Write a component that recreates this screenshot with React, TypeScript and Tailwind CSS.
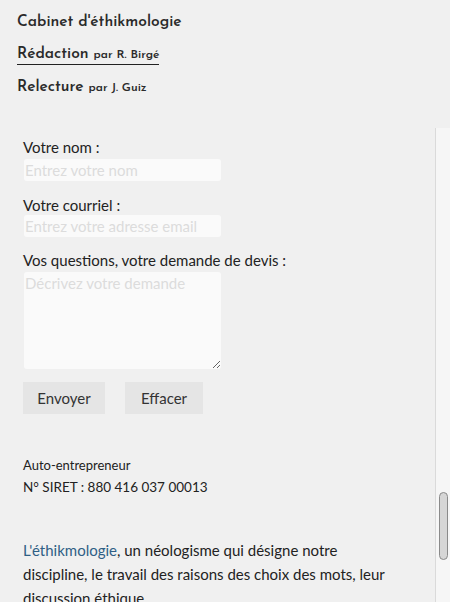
import React from "react";

export default function App() {
  const head = { fontFamily: '"Josefin Sans", "Lato", "Noto Sans", sans-serif' };
  const body = { fontFamily: 'Lato, "Noto Sans", sans-serif' };
  return (
    <div className="h-[602px] w-[450px] overflow-hidden bg-[#f0f0f0] flex flex-col text-[#222]" style={body}>
      <div className="px-[17px] pt-[12px] h-[128px] text-[#2a2a2a]" style={head}>
        <div className="text-[15.5px] font-semibold leading-[20px]">Cabinet d'éthikmologie</div>
        <div className="mt-[14px] leading-[17px]">
          <span className="inline-block border-b border-[#222] leading-[17px]">
            <span className="text-[15.5px] font-semibold">Rédaction</span>
            <span className="text-[12px] font-semibold ml-[5px]">par R. Birgé</span>
          </span>
        </div>
        <div className="mt-[12px] leading-[20px]">
          <span className="text-[15.5px] font-semibold">Relecture</span>
          <span className="text-[12px] font-semibold ml-[5px]">par J. Guiz</span>
        </div>
      </div>
      <div className="flex flex-1 min-h-0">
        <div className="w-[436px] border-r border-[#dadada] pl-[23px] pt-[8px]">
          <form className="flex flex-col">
            <label className="text-[15px] leading-[22px] text-[#222]">Votre nom :</label>
            <input
              className="mt-[1px] ml-[1px] w-[197px] h-[22px] rounded-[3px] bg-[#fafafa] px-[1px] text-[15px] outline-none placeholder:text-[#dcdcdc]"
              placeholder="Entrez votre nom"
            />
            <label className="mt-[13px] text-[15px] leading-[22px] text-[#222]">Votre courriel :</label>
            <input
              className="mt-[-1px] ml-[1px] w-[197px] h-[22px] rounded-[3px] bg-[#fafafa] px-[1px] text-[15px] outline-none placeholder:text-[#dcdcdc]"
              placeholder="Entrez votre adresse email"
            />
            <label className="mt-[12px] text-[15px] leading-[22px] text-[#222]">Vos questions, votre demande de devis :</label>
            <textarea
              className="mt-[1px] ml-[1px] w-[197px] h-[97px] rounded-[3px] bg-[#fafafa] px-[1px] text-[15px] leading-[22px] outline-none placeholder:text-[#dcdcdc] resize"
              placeholder="Décrivez votre demande"
            />
            <div className="mt-[13px] flex gap-[20px]">
              <button type="button" className="w-[82px] h-[32px] bg-[#e5e5e5] text-[15px] text-[#333]">Envoyer</button>
              <button type="button" className="w-[78px] h-[32px] bg-[#e5e5e5] text-[15px] text-[#333]">Effacer</button>
            </div>
          </form>
          <div className="mt-[40px] text-[13px] leading-[22px] text-[#222]">
            <div>Auto-entrepreneur</div>
            <div className="text-[13.5px]">N° SIRET : 880 416 037 00013</div>
          </div>
          <p className="mt-[40px] w-[372px] text-[15px] leading-[24px] text-[#222]">
            <a className="text-[#2f5f86]">L'éthikmologie</a>, un néologisme qui désigne notre discipline, le travail des raisons des choix des mots, leur discussion éthique.
          </p>
        </div>
        <div className="flex-1 bg-[#f6f6f6] flex flex-col items-center pt-[364px]">
          <div className="w-[9px] h-[68px] rounded-full border border-[#8a8a8a] bg-[#d6d6d6]" />
        </div>
      </div>
    </div>
  );
}
